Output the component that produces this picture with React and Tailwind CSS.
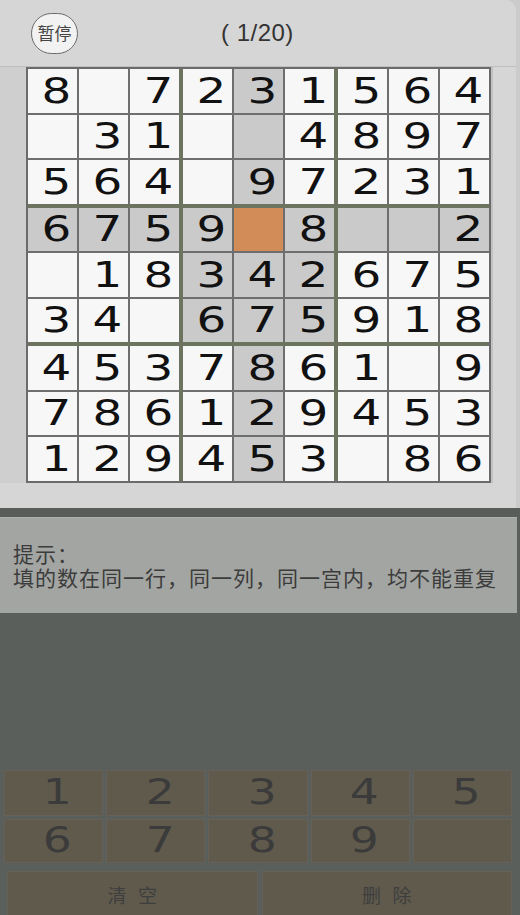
import React from "react";

const board = [
  "8_7231564",
  "_31__4897",
  "564_97231",
  "6759_8__2",
  "_18342675",
  "34_675918",
  "4537861_9",
  "786129453",
  "129453_86",
];

const SEL_R = 3;
const SEL_C = 4;

function cellBg(r, c) {
  if (r === SEL_R && c === SEL_C) return "bg-[#d28c58]";
  const sameBox =
    Math.floor(r / 3) === Math.floor(SEL_R / 3) &&
    Math.floor(c / 3) === Math.floor(SEL_C / 3);
  if (r === SEL_R || c === SEL_C || sameBox) return "bg-[#cacaca]";
  return "bg-[#f7f7f7]";
}

const digitFont = { fontFamily: '"DejaVu Sans", sans-serif' };
const cjk = {
  fontFamily: '"Noto Sans CJK SC", "Noto Sans", sans-serif',
};

function Cell({ r, c }) {
  const ch = board[r][c];
  return (
    <div
      className={`h-[43.5px] flex items-center justify-center pl-[7px] ${cellBg(r, c)}`}
    >
      {ch !== "_" && (
        <span
          className="text-[36px] leading-none text-[#111] scale-x-[1.3] inline-block"
          style={digitFont}
        >
          {ch}
        </span>
      )}
    </div>
  );
}

function Box({ br, bc }) {
  const cells = [];
  for (let i = 0; i < 3; i++)
    for (let j = 0; j < 3; j++)
      cells.push(<Cell key={`${i}-${j}`} r={br * 3 + i} c={bc * 3 + j} />);
  return (
    <div className="grid grid-cols-[49px_49px_49px] gap-[2px] bg-[#6e6e6e]">
      {cells}
    </div>
  );
}

function KeyBtn({ children, className = "" }) {
  return (
    <div
      className={`bg-[#605a4d] border border-[#656159] flex items-center justify-center pl-[8px] ${className}`}
    >
      <span
        className="text-[35px] leading-none text-[#3b3b3b] scale-x-[1.3] inline-block"
        style={digitFont}
      >
        {children}
      </span>
    </div>
  );
}

export default function App() {
  const boxes = [];
  for (let i = 0; i < 3; i++)
    for (let j = 0; j < 3; j++) boxes.push(<Box key={`${i}${j}`} br={i} bc={j} />);

  return (
    <div className="w-[520px] h-[915px] overflow-hidden bg-[#5a5f5b] flex flex-col">
      {/* top light section */}
      <div className="shrink-0 bg-[#cbcbcb] flex flex-col">
        {/* header */}
        <div className="h-[67px] w-[516px] bg-[#d6d6d6] rounded-tr-[10px] border-b border-[#bfbfbf] flex items-center relative">
          <div
            className="ml-[31px] w-[47px] h-[41px] rounded-full bg-[#f2f2f2] border border-[#6a6a6a] flex items-center justify-center text-[17px] text-[#444]"
            style={cjk}
          >
            暂停
          </div>
          <div
            className="absolute left-[221px] top-[18px] text-[24px] leading-[30px] text-[#333] tracking-[0.5px]"
            style={{ fontFamily: '"Liberation Sans", Arial, sans-serif' }}
          >
            ( 1/20)
          </div>
        </div>
        {/* game area */}
        <div className="w-[516px] bg-[#d3d3d3] flex flex-col">
          <div className="flex">
            <div className="w-[26px] bg-[#cfcfcf]" />
            <div className="border-2 border-[#6b6b6b] bg-[#6c745f]">
              <div className="grid grid-cols-[151px_151px_151px] gap-[4px]">
                {boxes}
              </div>
            </div>
            <div className="flex-1 bg-[#d6d6d6] border-l-2 border-[#c2c2c2]" />
          </div>
          <div className="h-[25px] bg-[#d6d6d6]" />
        </div>
      </div>
      {/* dark band */}
      <div className="shrink-0 h-[9px] bg-[#585d59]" />
      {/* hint */}
      <div
        className="shrink-0 w-[517px] h-[96px] bg-[#a3a5a2] border-t border-[#aeb0ad] pt-[23px] pl-[13px] text-[21px] leading-[24px] text-[#3c3c3c] tracking-[1px]"
        style={cjk}
      >
        <div>提示：</div>
        <div className="whitespace-nowrap">填的数在同一行，同一列，同一宫内，均不能重复</div>
      </div>
      {/* spacer */}
      <div className="shrink-0 h-[157px]" />
      {/* keypad */}
      <div className="shrink-0 pl-[4px] w-[512px] flex flex-col">
        <div className="grid grid-cols-5 gap-[3px] h-[46px]">
          {[1, 2, 3, 4, 5].map((n) => (
            <KeyBtn key={n}>{n}</KeyBtn>
          ))}
        </div>
        <div className="grid grid-cols-5 gap-[3px] h-[44px] mt-[3px]">
          {[6, 7, 8, 9].map((n) => (
            <KeyBtn key={n}>{n}</KeyBtn>
          ))}
          <KeyBtn> </KeyBtn>
        </div>
        <div className="grid grid-cols-2 gap-[4px] h-[50px] mt-[8px] pl-[3px]">
          <div
            className="bg-[#605a4d] border border-[#656159] flex items-center justify-center text-[19px] text-[#3e3e3e] tracking-[0.6em] pl-[0.6em]"
            style={cjk}
          >
            清空
          </div>
          <div
            className="bg-[#605a4d] border border-[#656159] flex items-center justify-center text-[19px] text-[#3e3e3e] tracking-[0.6em] pl-[0.6em]"
            style={cjk}
          >
            删除
          </div>
        </div>
      </div>
    </div>
  );
}
